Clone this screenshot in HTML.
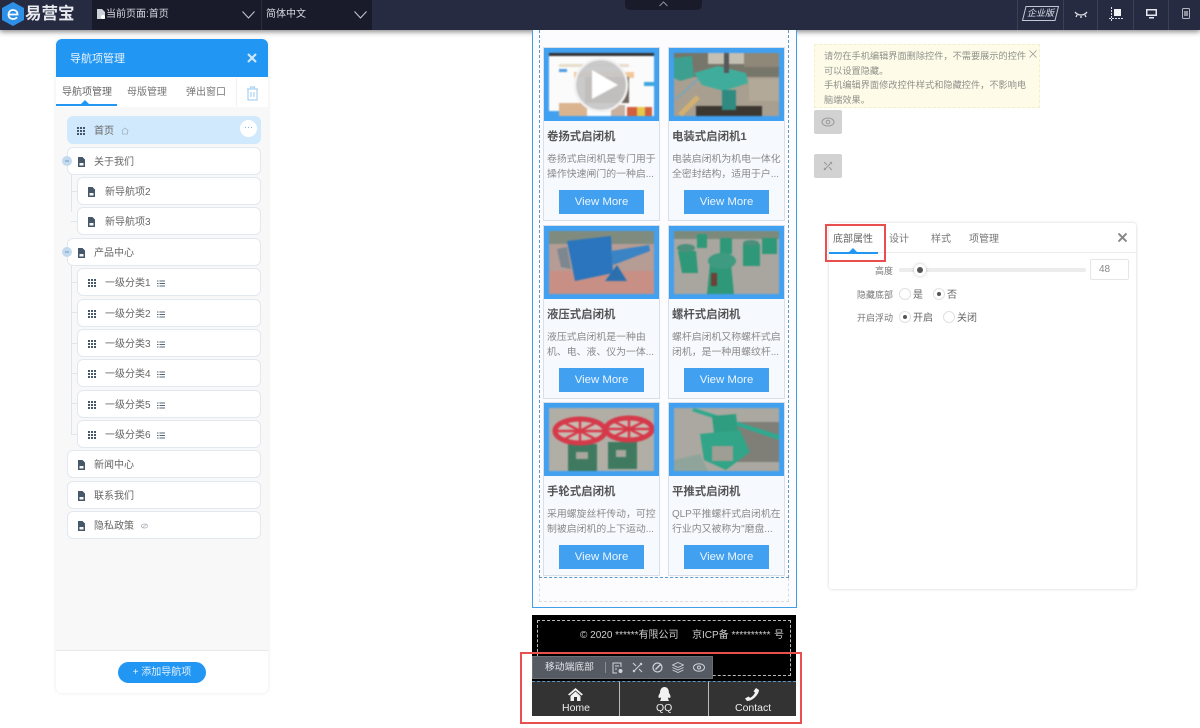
<!DOCTYPE html>
<html lang="zh"><head><meta charset="utf-8"><title>易营宝</title>
<style>
*{box-sizing:border-box}
html,body{margin:0;padding:0;width:1200px;height:728px;overflow:hidden;background:#fff;font-family:"Liberation Sans","Noto Sans CJK SC",sans-serif;color:#666}
.a{position:absolute}
.t{position:absolute;white-space:nowrap;line-height:1;margin-top:2px}
.row{position:absolute;height:28px;background:#fff;border:1px solid #e2e8f0;border-radius:6px;right:0}
.row span{position:absolute;top:9px;font-size:10px;line-height:12px;color:#666;white-space:nowrap}
.row svg{position:absolute;top:8px}
.card{position:absolute;width:117px;height:174px;background:#f6f9fe;border:1px solid #d9dfe8}
.pic{position:absolute;left:0;top:0;width:115px;height:73px;background:#42a0f0}
.pic svg{position:absolute;left:5px;top:5px;filter:blur(.7px)}
.card b{position:absolute;left:3px;top:82px;font-size:11.400px;line-height:14px;color:#555;white-space:nowrap}
.card p{position:absolute;left:3px;top:105px;width:112px;margin:0;font-size:9.900px;line-height:14.500px;color:#8a8a8a;white-space:nowrap}
.card a{position:absolute;left:15px;top:142px;width:85px;height:24px;background:#42a0f0;color:#eaf5ff;text-align:center;font-size:11.400px;line-height:24px}
.ln{position:absolute;background:#dfe5ec}
.tb{position:absolute;top:0;height:30px;width:1px;background:#3a4056}
</style></head><body>

<!-- top bar -->
<div class="a" style="left:0;top:0;width:1200px;height:30px;background:#262b42;box-shadow:0 2px 5px rgba(0,0,0,.45)"></div>
<div class="a" style="left:92px;top:0;width:280px;height:30px;background:#191b2b"></div>
<div class="a" style="left:261px;top:0;width:1px;height:30px;background:#2a2d40"></div>
<svg class="a" style="left:1px;top:2px" width="24" height="24" viewBox="0 0 24 24"><path d="M12 0L23 6V18L12 24L1 18V6Z" fill="#2e8fe6"/><path d="M7.500 12.500H16.500C16.500 9.500 14.500 8 12 8C9.200 8 7.500 10 7.500 12.500C7.500 15.500 9.500 17 12 17C13.700 17 15 16.400 16 15.300" fill="none" stroke="#fff" stroke-width="1.800"/></svg>
<div class="t" style="left:25px;top:4px;font-size:16.500px;font-weight:bold;color:#e9ebf0">易营宝</div>
<svg class="a" style="left:96px;top:9px" width="10" height="11" viewBox="0 0 10 11"><path d="M1 0H6L9 3V10H1Z" fill="#ccd0d8"/><circle cx="7" cy="8" r="2" fill="#fff"/></svg>
<div class="t" style="left:106px;top:8px;font-size:10px;color:#d8dae0">当前页面:首页</div>
<svg class="a" style="left:242px;top:11px" width="13" height="8" viewBox="0 0 13 8"><path d="M.5.500L6.500 7L12.500.500" fill="none" stroke="#c8cad2" stroke-width="1"/></svg>
<div class="t" style="left:266px;top:8px;font-size:10px;color:#d8dae0">简体中文</div>
<svg class="a" style="left:354px;top:11px" width="13" height="8" viewBox="0 0 13 8"><path d="M.5.500L6.500 7L12.500.500" fill="none" stroke="#c8cad2" stroke-width="1"/></svg>
<div class="a" style="left:625px;top:0;width:77px;height:10px;background:#191b2b;border-radius:0 0 5px 5px"></div>
<svg class="a" style="left:659px;top:1px" width="9" height="6" viewBox="0 0 9 6"><path d="M.5 5L4.500 1L8.500 5" fill="none" stroke="#8c8f9c"/></svg>
<div class="tb" style="left:1017px"></div><div class="tb" style="left:1063px"></div><div class="tb" style="left:1097px"></div><div class="tb" style="left:1133px"></div><div class="tb" style="left:1168px"></div>
<svg class="a" style="left:1022px;top:6px" width="37" height="15" viewBox="0 0 37 15"><path d="M4 .5H36.500L33 14.500H.5Z" fill="none" stroke="#c5c8d2"/></svg>
<div class="t" style="left:1027px;top:7px;font-size:9px;font-style:italic;color:#dfe1e8">企业版</div>
<svg class="a" style="left:1074px;top:11px" width="14" height="8" viewBox="0 0 14 8"><path d="M1 1C4 5 10 5 13 1M3 4L2 6M7 5V7M11 4L12 6" fill="none" stroke="#e8e9ee" stroke-width="1.300"/></svg>
<svg class="a" style="left:1109px;top:7px" width="15" height="15" viewBox="0 0 15 15"><rect x="5" y="2" width="7" height="7" fill="#f2f3f6"/><path d="M2.500 0V14M0 11.500H14" fill="none" stroke="#dcdde3" stroke-dasharray="2 1"/></svg>
<svg class="a" style="left:1146px;top:9px" width="11" height="10" viewBox="0 0 11 10"><path d="M0 0H11V7H0Z" fill="#e6e7ec"/><rect x="1.500" y="1.500" width="8" height="4" fill="#262b42"/><rect x="3" y="8" width="5" height="1.500" fill="#e6e7ec"/></svg>
<svg class="a" style="left:1182px;top:8px" width="8" height="11" viewBox="0 0 8 11"><rect x=".5" y=".5" width="7" height="10" rx="1" fill="none" stroke="#b4b7c2"/><rect x="2" y="3" width="4" height="5" fill="#8b8f9e"/></svg>

<!-- left panel -->
<div class="a" style="left:56px;top:39px;width:212px;height:654px;background:#f8f8f8;border-radius:6px;box-shadow:0 0 4px rgba(0,0,0,.09)"></div>
<div class="a" style="left:56px;top:39px;width:212px;height:38px;background:#2196f3;border-radius:6px 6px 0 0"></div>
<div class="t" style="left:70px;top:52px;font-size:11px;color:#e8f4fe">导航项管理</div>
<svg class="a" style="left:247px;top:53px" width="10" height="10" viewBox="0 0 10 10"><path d="M1 1L9 9M9 1L1 9" stroke="#cfe7fb" stroke-width="2.200"/></svg>
<div class="a" style="left:56px;top:77px;width:212px;height:30px;background:#fff"></div>
<div class="t" style="left:62px;top:86px;font-size:10px;color:#666">导航项管理</div>
<div class="t" style="left:127px;top:86px;font-size:10px;color:#777">母版管理</div>
<div class="t" style="left:186px;top:86px;font-size:10px;color:#777">弹出窗口</div>
<div class="a" style="left:56px;top:104px;width:61px;height:1.500px;background:#2196f3"></div>
<div class="a" style="left:81px;top:100px;width:0;height:0;border:4px solid transparent;border-top:0;border-bottom:4px solid #2196f3"></div>
<div class="a" style="left:236px;top:78px;width:1px;height:28px;background:#f0f0f0"></div>
<svg class="a" style="left:246px;top:86px" width="13" height="15" viewBox="0 0 13 15"><path d="M1 3H12M4.500 3V1H8.500V3M2 3V14H11V3M5 6V11M8 6V11" fill="none" stroke="#a9d3f4" stroke-width="1.200"/></svg>

<!-- tree lines -->
<div class="ln" style="left:71px;top:175px;width:1px;height:37px"></div><div class="ln" style="left:71px;top:191px;width:7px;height:1px"></div><div class="ln" style="left:71px;top:221px;width:7px;height:1px"></div>
<div class="ln" style="left:71px;top:265px;width:1px;height:170px"></div>
<div class="ln" style="left:71px;top:282px;width:7px;height:1px"></div><div class="ln" style="left:71px;top:312px;width:7px;height:1px"></div><div class="ln" style="left:71px;top:343px;width:7px;height:1px"></div><div class="ln" style="left:71px;top:373px;width:7px;height:1px"></div><div class="ln" style="left:71px;top:403px;width:7px;height:1px"></div><div class="ln" style="left:71px;top:434px;width:7px;height:1px"></div>

<svg width="0" height="0" style="position:absolute"><defs>
<g id="doc"><path d="M1 0H5.500L8 2.500V10H1Z" fill="#46576a"/><rect x="2.500" y="6" width="4" height="2.500" fill="#f4f6f8"/></g>
<g id="grid" fill="#46576a"><rect x="0" y="0" width="2" height="2"/><rect x="3" y="0" width="2" height="2"/><rect x="6" y="0" width="2" height="2"/><rect x="0" y="3" width="2" height="2"/><rect x="3" y="3" width="2" height="2"/><rect x="6" y="3" width="2" height="2"/><rect x="0" y="6" width="2" height="2"/><rect x="3" y="6" width="2" height="2"/><rect x="6" y="6" width="2" height="2"/></g>
<g id="list"><path d="M0 1H1.500M2.500 1H8M0 3.500H1.500M2.500 3.500H8M0 6H1.500M2.500 6H8" stroke="#556575" stroke-width="1"/></g>
</defs></svg>

<div class="row" style="left:67px;width:194px;top:116px;background:#d0e9fc;border-color:#d0e9fc">
<svg style="left:9px;top:10px" width="8" height="8"><use href="#grid"/></svg><span style="left:26px;top:9px">首页</span>
<svg style="left:53px;top:10px" width="8" height="8" viewBox="0 0 8 8"><path d="M.5 4L4 1L7.500 4M1.500 4V7H6.500V4" fill="none" stroke="#9fb4c4" stroke-width=".8"/></svg>
<div class="a" style="left:172px;top:3px;width:17px;height:17px;border-radius:50%;background:#fff;color:#6aa9dc;font-size:9px;line-height:15px;text-align:center">···</div></div>
<div class="row" style="left:67px;width:194px;top:147px"><svg style="left:9px;top:9px" width="9" height="10"><use href="#doc"/></svg><span style="left:26px">关于我们</span></div>
<svg class="a" style="left:62px;top:156px" width="10" height="10"><circle cx="5" cy="5" r="5" fill="#c2d9ee"/><path d="M3 5H7" stroke="#6a9bc8"/></svg>
<div class="row" style="left:77px;width:184px;top:177px"><svg style="left:9px;top:9px" width="9" height="10"><use href="#doc"/></svg><span style="left:27px">新导航项2</span></div>
<div class="row" style="left:77px;width:184px;top:207px"><svg style="left:9px;top:9px" width="9" height="10"><use href="#doc"/></svg><span style="left:27px">新导航项3</span></div>
<div class="row" style="left:67px;width:194px;top:238px"><svg style="left:9px;top:9px" width="9" height="10"><use href="#doc"/></svg><span style="left:26px">产品中心</span></div>
<svg class="a" style="left:62px;top:247px" width="10" height="10"><circle cx="5" cy="5" r="5" fill="#c2d9ee"/><path d="M3 5H7" stroke="#6a9bc8"/></svg>
<div class="row" style="left:77px;width:184px;top:268px"><svg style="left:10px;top:10px" width="8" height="8"><use href="#grid"/></svg><span style="left:27px">一级分类1</span><svg style="left:79px;top:11px" width="8" height="7"><use href="#list"/></svg></div>
<div class="row" style="left:77px;width:184px;top:299px"><svg style="left:10px;top:10px" width="8" height="8"><use href="#grid"/></svg><span style="left:27px">一级分类2</span><svg style="left:79px;top:11px" width="8" height="7"><use href="#list"/></svg></div>
<div class="row" style="left:77px;width:184px;top:329px"><svg style="left:10px;top:10px" width="8" height="8"><use href="#grid"/></svg><span style="left:27px">一级分类3</span><svg style="left:79px;top:11px" width="8" height="7"><use href="#list"/></svg></div>
<div class="row" style="left:77px;width:184px;top:359px"><svg style="left:10px;top:10px" width="8" height="8"><use href="#grid"/></svg><span style="left:27px">一级分类4</span><svg style="left:79px;top:11px" width="8" height="7"><use href="#list"/></svg></div>
<div class="row" style="left:77px;width:184px;top:390px"><svg style="left:10px;top:10px" width="8" height="8"><use href="#grid"/></svg><span style="left:27px">一级分类5</span><svg style="left:79px;top:11px" width="8" height="7"><use href="#list"/></svg></div>
<div class="row" style="left:77px;width:184px;top:420px"><svg style="left:10px;top:10px" width="8" height="8"><use href="#grid"/></svg><span style="left:27px">一级分类6</span><svg style="left:79px;top:11px" width="8" height="7"><use href="#list"/></svg></div>
<div class="row" style="left:67px;width:194px;top:450px"><svg style="left:9px;top:9px" width="9" height="10"><use href="#doc"/></svg><span style="left:26px">新闻中心</span></div>
<div class="row" style="left:67px;width:194px;top:481px"><svg style="left:9px;top:9px" width="9" height="10"><use href="#doc"/></svg><span style="left:26px">联系我们</span></div>
<div class="row" style="left:67px;width:194px;top:511px"><svg style="left:9px;top:9px" width="9" height="10"><use href="#doc"/></svg><span style="left:26px">隐私政策</span>
<svg style="left:73px;top:11px" width="7" height="6" viewBox="0 0 7 6"><ellipse cx="3.500" cy="3" rx="3" ry="2" fill="none" stroke="#a8b0b8" stroke-width=".8"/><path d="M1 5L6 1" stroke="#a8b0b8" stroke-width=".6"/></svg></div>

<div class="a" style="left:56px;top:650px;width:212px;height:43px;background:#fff;border-top:1px solid #e8e8e8;border-radius:0 0 6px 6px"></div>
<div class="a" style="left:118px;top:662px;width:88px;height:21px;background:#2196f3;border-radius:11px;color:#e4f2fe;font-size:10px;line-height:22px;text-align:center">+ 添加导航项</div>

<!-- phone -->
<div class="a" style="left:532px;top:30px;width:265px;height:578px;background:#fcfcfe;border:solid #3f9fe8;border-width:0 1.500px 1.500px 1.500px"></div>
<div class="a" style="left:539px;top:30px;width:250px;height:548px;border:1px dashed #5d9cc9;border-top:0"></div>
<div class="a" style="left:539px;top:578px;width:250px;height:24px;border:1px dashed #d8dde5;border-top:0"></div>

<div class="card" style="left:543px;top:47px"><div class="pic"><svg width="105" height="63" viewBox="0 0 105 63">
<rect width="105" height="63" fill="#fbfbfb"/><rect width="105" height="3" fill="#333"/><rect x="10" y="11" width="70" height="3" fill="#e8dccb"/><rect x="10" y="16" width="8" height="3" fill="#4b9be0"/><rect x="25" y="19" width="60" height="6" fill="#f3c79a"/><rect x="36" y="24" width="44" height="26" fill="#6f655c"/><rect x="0" y="58" width="10" height="5" fill="#42a0f0"/><rect x="95" y="29" width="10" height="4" fill="#3aa6dd"/><rect x="10" y="50" width="28" height="13" fill="#d9b48f"/><rect x="62" y="52" width="14" height="11" fill="#c8b0a0"/><rect x="78" y="54" width="25" height="9" fill="#d2603f"/><rect x="88" y="54" width="8" height="9" fill="#e6c84a"/>
<circle cx="52" cy="32" r="26" fill="#c6c6c6" fill-opacity=".93" stroke="#f1f1f1" stroke-width="2.500"/><path d="M43 17L69 32L43 46Z" fill="#fff"/></svg></div>
<b>卷扬式启闭机</b><p>卷扬式启闭机是专门用于<br>操作快速闸门的一种启...</p><a>View More</a></div>

<div class="card" style="left:668px;top:47px"><div class="pic"><svg width="105" height="63" viewBox="0 0 105 63">
<rect width="105" height="63" fill="#a89f90"/><rect width="105" height="24" fill="#77766a"/><rect x="34" y="0" width="36" height="11" fill="#c4bfb3"/><rect x="70" y="0" width="35" height="14" fill="#8f8778"/><rect x="22" y="53" width="66" height="10" fill="#3c3831"/><rect x="75" y="26" width="30" height="22" fill="#b3a999"/>
<path d="M0 5L18 3L20 24L6 28L0 25Z" fill="#3d9f90"/><path d="M20 20L44 13L72 20L74 30L50 38L28 32Z" fill="#40ad9c"/><rect x="48" y="37" width="14" height="20" fill="#2f8a80"/><rect x="50" y="0" width="5" height="20" fill="#55585a"/><path d="M6 62L24 44" stroke="#d4b070" stroke-width="5"/><path d="M24 26L2 46" stroke="#6aa8c8" stroke-width="1.500"/></svg></div>
<b>电装式启闭机1</b><p>电装启闭机为机电一体化<br>全密封结构，适用于户...</p><a>View More</a></div>

<div class="card" style="left:543px;top:225px"><div class="pic"><svg width="105" height="63" viewBox="0 0 105 63">
<rect width="105" height="63" fill="#b59c95"/><rect width="105" height="13" fill="#7f8b7f"/><rect y="40" width="105" height="23" fill="#c88f85"/>
<path d="M8 18L18 16L22 38L12 36Z" fill="#7d8790"/><path d="M18 10L62 5L64 42L26 50Z" fill="#2a75bd"/><path d="M62 20L100 14L101 20L64 34Z" fill="#3a83c4"/><path d="M56 50L68 34L78 50Z" fill="#2c6fae"/></svg></div>
<b>液压式启闭机</b><p>液压式启闭机是一种由<br>机、电、液、仪为一体...</p><a>View More</a></div>

<div class="card" style="left:668px;top:225px"><div class="pic"><svg width="105" height="63" viewBox="0 0 105 63">
<rect width="105" height="63" fill="#a9a69f"/><rect width="105" height="8" fill="#7c8a7c"/>
<g fill="#2f9878"><path d="M4 20H22L24 42H8Z"/><path d="M23 3H33V17H23Z"/><path d="M46 7H58V23H46Z"/><path d="M69 13H86V35H69Z"/><path d="M88 7H103V23H88Z"/><path d="M36 33H57L60 63H33Z"/></g>
<ellipse cx="12" cy="17" rx="9" ry="4" fill="#4c8f7c"/><ellipse cx="48" cy="30" rx="14" ry="8" fill="#3e9a80"/><ellipse cx="77" cy="12" rx="8" ry="3" fill="#4c8f7c"/><rect x="37" y="42" width="6" height="13" fill="#6e4038"/></svg></div>
<b>螺杆式启闭机</b><p>螺杆启闭机又称螺杆式启<br>闭机，是一种用螺纹杆...</p><a>View More</a></div>

<div class="card" style="left:543px;top:402px"><div class="pic"><svg width="105" height="63" viewBox="0 0 105 63">
<rect width="105" height="63" fill="#b1aea6"/>
<path d="M19 36H48L48 63H19Z" fill="#3f7a60"/><path d="M59 34H88V61H59Z" fill="#3f7a60"/><rect x="27" y="44" width="12" height="7" fill="#a9a69e"/><rect x="67" y="42" width="10" height="7" fill="#a9a69e"/>
<ellipse cx="31" cy="23" rx="25" ry="12" fill="#c8bcb2"/><ellipse cx="80" cy="21" rx="23" ry="11" fill="#c8bcb2"/>
<ellipse cx="31" cy="23" rx="25" ry="12" fill="none" stroke="#d53a4a" stroke-width="5"/><ellipse cx="80" cy="21" rx="23" ry="11" fill="none" stroke="#d53a4a" stroke-width="5"/><path d="M7 23H55M31 11V35M14 14L48 32M48 14L14 32M58 21H102M80 10V32M64 13L96 29M96 13L64 29" stroke="#d53a4a" stroke-width="2.500"/></svg></div>
<b>手轮式启闭机</b><p>采用螺旋丝杆传动，可控<br>制被启闭机的上下运动...</p><a>View More</a></div>

<div class="card" style="left:668px;top:402px"><div class="pic"><svg width="105" height="63" viewBox="0 0 105 63">
<rect width="105" height="63" fill="#aaa8a0"/><rect x="63" y="14" width="42" height="40" fill="#7f7f77"/>
<path d="M20 0L105 27V32L18 3Z" fill="#2fa98f"/><path d="M38 8L62 6L64 25H40Z" fill="#2f9d80"/><path d="M26 26L66 22L76 44L52 62L30 52Z" fill="#32a487"/><rect x="38" y="38" width="21" height="15" fill="#9e9e94"/><path d="M0 52L26 46L34 63H0Z" fill="#8fa49b"/></svg></div>
<b>平推式启闭机</b><p>QLP平推螺杆式启闭机在<br>行业内又被称为"磨盘...</p><a>View More</a></div>

<!-- footer -->
<div class="a" style="left:532px;top:615px;width:264px;height:67px;background:#000"></div>
<div class="a" style="left:537px;top:620px;width:254px;height:56px;border:1px dashed #bbb"></div>
<div class="t" style="left:580px;top:629px;font-size:10px;color:#d0d0d0">© 2020 ******有限公司</div>
<div class="t" style="left:692px;top:629px;font-size:10px;color:#d0d0d0">京ICP备 **********</div>
<div class="t" style="left:774px;top:629px;font-size:10px;color:#d0d0d0">号</div>
<div class="a" style="left:532px;top:681px;width:264px;height:35px;background:#333;border-top:1px dashed #5e96c0"></div>
<div class="a" style="left:619px;top:682px;width:1px;height:34px;background:#bbb"></div>
<div class="a" style="left:708px;top:682px;width:1px;height:34px;background:#bbb"></div>
<svg class="a" style="left:568px;top:688px" width="15" height="13" viewBox="0 0 15 13"><path d="M0 6.500L7.500 0L15 6.500L13.500 7.500L7.500 2.500L1.500 7.500Z" fill="#f2f2f2"/><path d="M2.500 8L7.500 3.500L12.500 8V13H9V9H6V13H2.500Z" fill="#f2f2f2"/></svg>
<div class="t" style="left:562px;top:701px;font-size:10.500px;color:#eee">Home</div>
<svg class="a" style="left:657px;top:687px" width="15" height="15" viewBox="0 0 15 15"><path d="M3 6C3 2 5 0 7.500 0S12 2 12 6C13.500 8 14 10 13 11L11 10.500C11 12 11.500 13 12 14H3C3.500 13 4 12 4 10.500L2 11C1 10 1.500 8 3 6Z" fill="#f2f2f2"/></svg>
<div class="t" style="left:656px;top:701px;font-size:10.500px;color:#eee">QQ</div>
<svg class="a" style="left:745px;top:688px" width="14" height="13" viewBox="0 0 14 13"><path d="M11 0L14 2C14 6 8 13 2 13L0 10.500L3.500 8.500L5 9.800C7 9 9 7 10 4.500L8.500 3.300Z" fill="#f2f2f2"/></svg>
<div class="t" style="left:735px;top:701px;font-size:10.500px;color:#eee">Contact</div>

<!-- toolbar -->
<div class="a" style="left:532px;top:656px;width:181px;height:23px;background:#565b63;border:1px solid #6b7078"></div>
<div class="t" style="left:545px;top:661px;font-size:9.800px;color:#e2e4e8">移动端底部</div>
<div class="a" style="left:605px;top:662px;width:1px;height:11px;background:#8a8e95"></div>
<svg class="a" style="left:612px;top:662px" width="11" height="12" viewBox="0 0 11 12"><path d="M9 5V1H1V11H5M3 4H7M3 7H5" fill="none" stroke="#d0d3d8"/><circle cx="8.500" cy="9" r="2" fill="#d0d3d8"/></svg>
<svg class="a" style="left:632px;top:662px" width="11" height="11" viewBox="0 0 11 11"><path d="M1 10L10 1M1 1L4 4M7 7L10 10M8 1L10 3M1 8L3 10" fill="none" stroke="#d0d3d8" stroke-width="1.100"/></svg>
<svg class="a" style="left:652px;top:662px" width="11" height="11" viewBox="0 0 11 11"><circle cx="5.500" cy="5.500" r="4.500" fill="none" stroke="#d0d3d8" stroke-width="1.200"/><path d="M3.500 7.500L9 2" stroke="#d0d3d8" stroke-width="1.500"/></svg>
<svg class="a" style="left:672px;top:662px" width="12" height="11" viewBox="0 0 12 11"><path d="M6 .5L11.500 3L6 5.500L.5 3ZM.5 5.500L6 8L11.500 5.500M.5 8L6 10.500L11.500 8" fill="none" stroke="#d0d3d8" stroke-width=".9"/></svg>
<svg class="a" style="left:693px;top:663px" width="12" height="9" viewBox="0 0 12 9"><ellipse cx="6" cy="4.500" rx="5.500" ry="3.800" fill="none" stroke="#d0d3d8"/><circle cx="6" cy="4.500" r="1.500" fill="none" stroke="#d0d3d8"/></svg>

<div class="a" style="left:520px;top:652px;width:282px;height:72px;border:2px solid #e94f4f"></div>

<!-- tip -->
<div class="a" style="left:814px;top:44px;width:226px;height:64px;background:#fefce8;border:1px dashed #f5efc8"></div>
<div class="a" style="left:824px;top:49px;width:215px;font-size:9.200px;line-height:14.500px;color:#8f8f8a;white-space:nowrap">请勿在手机编辑界面删除控件，不需要展示的控件<br>可以设置隐藏。<br>手机编辑界面修改控件样式和隐藏控件，不影响电<br>脑端效果。</div>
<svg class="a" style="left:1029px;top:50px" width="8" height="8" viewBox="0 0 8 8"><path d="M.5.500L7.500 7.500M7.500.500L.5 7.500" stroke="#999" stroke-width=".8"/></svg>
<div class="a" style="left:814px;top:110px;width:28px;height:24px;background:#d2d2d2;border-radius:2px"></div>
<svg class="a" style="left:821px;top:117px" width="14" height="10" viewBox="0 0 14 10"><ellipse cx="7" cy="5" rx="6" ry="4" fill="none" stroke="#999"/><circle cx="7" cy="5" r="1.800" fill="none" stroke="#999"/></svg>
<div class="a" style="left:814px;top:154px;width:28px;height:24px;background:#d2d2d2;border-radius:2px"></div>
<svg class="a" style="left:823px;top:161px" width="10" height="10" viewBox="0 0 10 10"><path d="M1 9L9 1M1 1L4 4M6 6L9 9M7 1L9 3M1 7L3 9" fill="none" stroke="#999"/></svg>

<!-- right panel -->
<div class="a" style="left:829px;top:223px;width:307px;height:366px;background:#fff;border-radius:3px;box-shadow:0 0 3px rgba(0,0,0,.18)"></div>
<div class="a" style="left:829px;top:252px;width:307px;height:1px;background:#ececec"></div>
<div class="t" style="left:833px;top:233px;font-size:10px;color:#666">底部属性</div>
<div class="t" style="left:889px;top:233px;font-size:10px;color:#777">设计</div>
<div class="t" style="left:931px;top:233px;font-size:10px;color:#777">样式</div>
<div class="t" style="left:969px;top:233px;font-size:10px;color:#777">项管理</div>
<div class="a" style="left:829px;top:252px;width:49px;height:1.500px;background:#2196f3"></div>
<div class="a" style="left:849px;top:248px;width:0;height:0;border:4px solid transparent;border-top:0;border-bottom:4px solid #2196f3"></div>
<svg class="a" style="left:1118px;top:233px" width="9" height="9" viewBox="0 0 9 9"><path d="M.5.500L8.500 8.500M8.500.500L.5 8.500" stroke="#888" stroke-width="2"/></svg>
<div class="a" style="left:825px;top:224px;width:61px;height:38px;border:2px solid #e94f4f"></div>
<div class="t" style="left:875px;top:265px;font-size:9px;color:#777">高度</div>
<div class="a" style="left:899px;top:268px;width:187px;height:4px;background:#ececec;border-radius:2px"></div>
<div class="a" style="left:914px;top:264px;width:12px;height:12px;border-radius:50%;background:#fff;box-shadow:0 0 3px rgba(0,0,0,.25)"></div>
<div class="a" style="left:917px;top:267px;width:6px;height:6px;border-radius:50%;background:#555"></div>
<div class="a" style="left:1090px;top:259px;width:39px;height:21px;border:1px solid #e6e6e6;border-radius:2px;font-size:10px;line-height:19px;color:#888;padding-left:8px">48</div>
<div class="t" style="left:857px;top:289px;font-size:9px;color:#777">隐藏底部</div>
<div class="a" style="left:899px;top:288px;width:12px;height:12px;border:1px solid #e0e0e0;border-radius:50%"></div>
<div class="t" style="left:913px;top:289px;font-size:10px;color:#666">是</div>
<div class="a" style="left:933px;top:288px;width:12px;height:12px;border:1px solid #e0e0e0;border-radius:50%"></div><div class="a" style="left:937px;top:292px;width:4px;height:4px;background:#555;border-radius:50%"></div>
<div class="t" style="left:947px;top:289px;font-size:10px;color:#666">否</div>
<div class="t" style="left:857px;top:312px;font-size:9px;color:#777">开启浮动</div>
<div class="a" style="left:899px;top:311px;width:12px;height:12px;border:1px solid #e0e0e0;border-radius:50%"></div><div class="a" style="left:903px;top:315px;width:4px;height:4px;background:#555;border-radius:50%"></div>
<div class="t" style="left:913px;top:312px;font-size:10px;color:#666">开启</div>
<div class="a" style="left:943px;top:311px;width:12px;height:12px;border:1px solid #e0e0e0;border-radius:50%"></div>
<div class="t" style="left:957px;top:312px;font-size:10px;color:#666">关闭</div>
</body></html>
